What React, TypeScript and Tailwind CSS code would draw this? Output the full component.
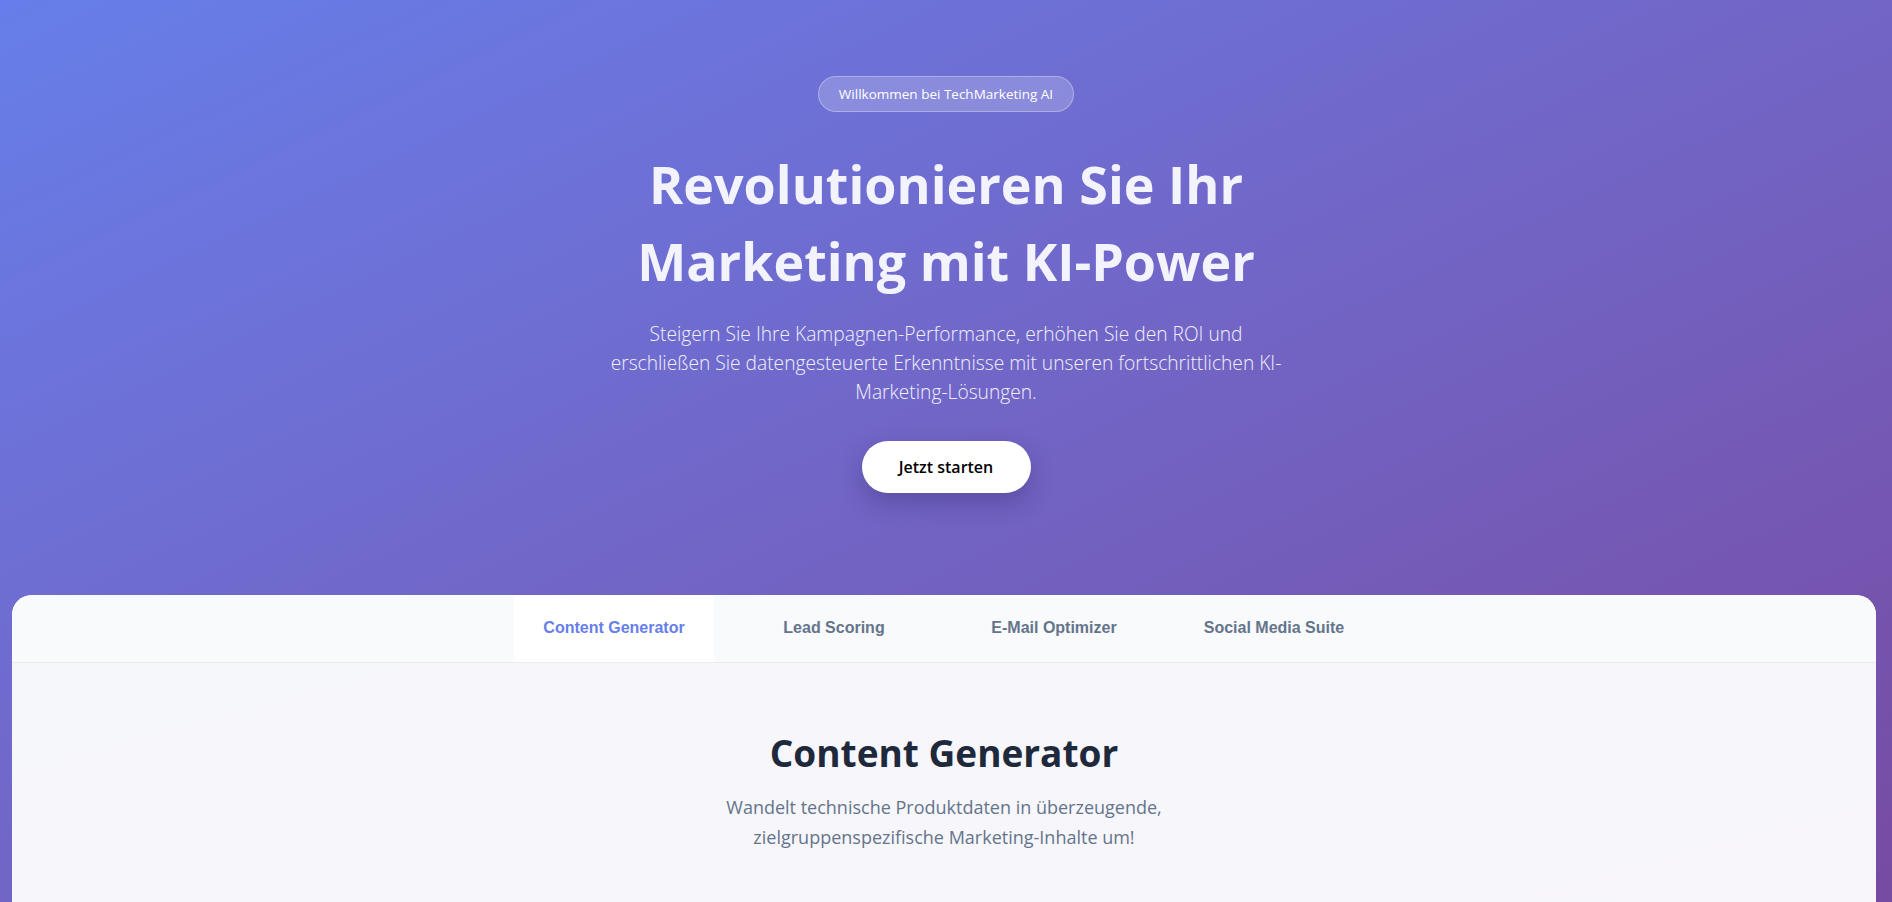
import React, { useState } from "react";

const tabs = ["Content Generator", "Lead Scoring", "E-Mail Optimizer", "Social Media Suite"];

export default function App() {
  const [active, setActive] = useState(0);

  return (
    <main className="min-h-screen bg-gradient-to-br from-[#667eea] to-[#764ba2] bg-fixed font-['Open_Sans',sans-serif]">
      {/* hero */}
      <section className="flex flex-col items-center pt-[76px] pb-[102px] text-center">
        <span className="rounded-full border border-white/30 bg-white/20 px-5 py-[7px] text-[13.5px] text-white">
          Willkommen bei TechMarketing AI
        </span>
        <h1 className="mt-[33px] text-[52px] font-bold leading-[77px] text-[#f3f3fd]">
          Revolutionieren Sie Ihr
          <br />
          Marketing mit KI-Power
        </h1>
        <p className="mt-[21px] text-[19.2px] font-light leading-[28.8px] text-white/90">
          Steigern Sie Ihre Kampagnen-Performance, erhöhen Sie den ROI und
          <br />
          erschließen Sie datengesteuerte Erkenntnisse mit unseren fortschrittlichen KI-
          <br />
          Marketing-Lösungen.
        </p>
        <button className="mt-[34px] h-[52px] w-[169px] rounded-full bg-white text-[16px] font-semibold text-black shadow-[0_10px_25px_rgba(40,30,90,0.3)]">
          Jetzt starten
        </button>
      </section>

      {/* tools card */}
      <section className="ml-[12px] mr-[16px] overflow-hidden rounded-t-[20px] bg-[#f7f7fb]">
        <nav className="flex h-[68px] justify-center gap-5 border-b border-[#e8ebf0] bg-[#f9fafc] font-['Liberation_Sans',Arial,sans-serif]">
          {tabs.map((t, i) => (
            <button
              key={t}
              onClick={() => setActive(i)}
              className={
                i === active
                  ? "w-[200px] bg-white text-[16px] font-bold text-[#667eea]"
                  : "w-[200px] text-[16px] font-bold text-[#64748b]"
              }
            >
              {t}
            </button>
          ))}
        </nav>

        <div className="flex min-h-[500px] flex-col items-center bg-gradient-to-br from-[#f6f7fb] to-[#f8f5fa] pt-[66px] text-center">
          <h2 className="text-[37px] font-bold leading-[48px] text-[#1e293b]">{tabs[active]}</h2>
          <p className="mt-[15px] text-[18px] leading-[30px] text-[#64748b]">
            Wandelt technische Produktdaten in überzeugende,
            <br />
            zielgruppenspezifische Marketing-Inhalte um!
          </p>
        </div>
      </section>
    </main>
  );
}
